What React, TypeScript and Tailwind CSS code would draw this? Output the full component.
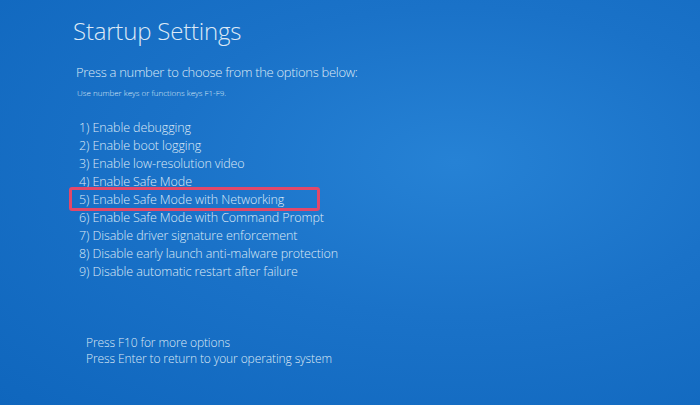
import React from "react";

const items = [
  "1) Enable debugging",
  "2) Enable boot logging",
  "3) Enable low-resolution video",
  "4) Enable Safe Mode",
  "5) Enable Safe Mode with Networking",
  "6) Enable Safe Mode with Command Prompt",
  "7) Disable driver signature enforcement",
  "8) Disable early launch anti-malware protection",
  "9) Disable automatic restart after failure",
];

export default function App() {
  return (
    <div
      className="w-[700px] h-[405px] overflow-hidden text-[#dde9f6] bg-[radial-gradient(ellipse_at_65%_40%,#2682d5_0%,#1a72c8_45%,#0f66bd_100%)]"
      style={{ fontFamily: '"Open Sans", "Noto Sans", sans-serif' }}
    >
      <div className="flex flex-col pl-[73px] pt-[15px]">
        <div className="text-[24px] leading-[32px] font-light tracking-[-0.2px]">Startup Settings</div>
        <div className="mt-[16px] pl-[3px] text-[13px] leading-[18px] font-light tracking-[-0.3px]">
          Press a number to choose from the options below:
        </div>
        <div className="mt-[6px] pl-[4px] text-[8px] leading-[12px] font-light">
          Use number keys or functions keys F1-F9.
        </div>
        <div className="mt-[20px] flex flex-col pl-[6px]">
          {items.map((t, i) => (
            <div key={i} className="relative h-[18px] text-[12.5px] leading-[18px] font-light tracking-[-0.1px]">
              {i === 4 && (
                <div className="absolute left-[-10px] top-[-4px] w-[251px] h-[24px] border-[3px] border-[#e2486a] rounded-[3px]" />
              )}
              <span className="relative">{t}</span>
            </div>
          ))}
        </div>
        <div className="mt-[54px] pl-[13px] flex flex-col text-[12px] leading-[16px] font-light tracking-[-0.1px]">
          <div>Press F10 for more options</div>
          <div>Press Enter to return to your operating system</div>
        </div>
      </div>
    </div>
  );
}
